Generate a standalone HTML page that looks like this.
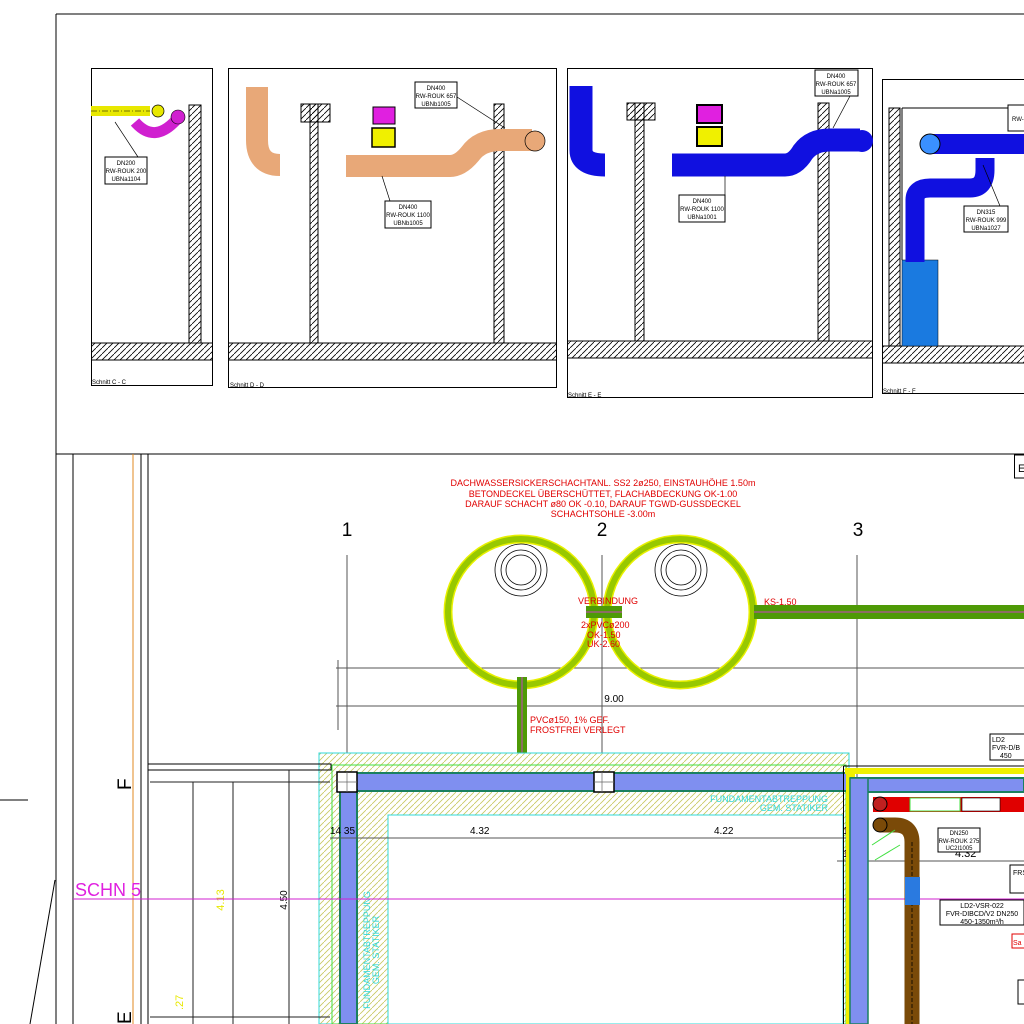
<!DOCTYPE html>
<html><head><meta charset="utf-8"><style>html,body{margin:0;padding:0;background:#fff}svg{display:block}</style></head>
<body>
<svg width="1024" height="1024" viewBox="0 0 1024 1024" xmlns="http://www.w3.org/2000/svg" font-family="Liberation Sans, sans-serif">
<defs>
<pattern id="h" width="6" height="6" patternUnits="userSpaceOnUse"><path d="M-1 7 L7 -1" stroke="#000" stroke-width="0.8"/></pattern>
<pattern id="hy" width="6" height="6" patternUnits="userSpaceOnUse"><rect width="6" height="6" fill="#fff"/><path d="M-1 7 L7 -1" stroke="#c8c860" stroke-width="0.8"/></pattern>
</defs>
<rect width="1024" height="1024" fill="#fff"/>
<!-- frames -->
<g stroke="#000" fill="none" stroke-width="1">
<path d="M56 14H1024M56 14V1024M56 454H1024M73 454V1024M141 454V1024M148 454V1024M0 800H28"/>
</g>
<path d="M133 454 L133 1024" stroke="#e08a20" stroke-width="1"/>
<path d="M56 530 L56 590" stroke="#000"/>
<path d="M55 880 L30 1024" stroke="#000"/>

<!-- Panel C -->
<rect x="91.5" y="68.5" width="121" height="317" fill="none" stroke="#000"/>
<rect x="189" y="105" width="12" height="238" fill="url(#h)" stroke="#000"/>
<rect x="91.5" y="343" width="121" height="17" fill="url(#h)" stroke="#000"/>
<path d="M91 111 H150" stroke="#e8e800" stroke-width="10"/>
<path d="M91 111 H150" stroke="#000" stroke-width="0.6" stroke-dasharray="6 2 1 2"/>
<circle cx="158" cy="111" r="6" fill="#e8e800" stroke="#000" stroke-width="0.7"/>
<path d="M135 122 Q155 145 178 118" stroke="#d020d0" stroke-width="11" fill="none"/>
<circle cx="178" cy="117" r="7" fill="#d020d0" stroke="#000" stroke-width="0.6"/>
<path d="M115 122 L138 157" stroke="#000" stroke-width="0.7"/>
<rect x="105" y="157" width="42" height="27" fill="#fff" stroke="#000"/>
<text x="126" y="165" font-size="6" text-anchor="middle">DN200</text>
<text x="126" y="173" font-size="6" text-anchor="middle">RW-ROUK 200</text>
<text x="126" y="181" font-size="6" text-anchor="middle">UBNa1104</text>
<text x="92" y="384" font-size="6">Schnitt C - C</text>

<!-- Panel D -->
<rect x="228.5" y="68.5" width="328" height="319" fill="none" stroke="#000"/>
<rect x="228.5" y="343" width="328" height="17" fill="url(#h)" stroke="#000"/>
<rect x="310" y="104" width="8" height="239" fill="url(#h)" stroke="#000"/>
<rect x="301" y="104" width="29" height="18" fill="url(#h)" stroke="#000"/>
<rect x="494" y="104" width="10" height="239" fill="url(#h)" stroke="#000"/>
<path d="M257 87 V140 Q257 165 280 165" stroke="#e8a878" stroke-width="22" fill="none"/>
<path d="M346 166 H450 Q460 166 470 154 Q480 140 500 140 H532" stroke="#e8a878" stroke-width="22" fill="none"/>
<circle cx="535" cy="141" r="10" fill="#e8a878" stroke="#000" stroke-width="0.7"/>
<rect x="373" y="107" width="22" height="17" fill="#e020e0" stroke="#000"/>
<rect x="372" y="128" width="23" height="19" fill="#f0f000" stroke="#000" stroke-width="1.5"/>
<path d="M382 176 L390 201" stroke="#000" stroke-width="0.7"/>
<rect x="385" y="201" width="46" height="27" fill="#fff" stroke="#000"/>
<text x="408" y="209" font-size="6" text-anchor="middle">DN400</text>
<text x="408" y="217" font-size="6" text-anchor="middle">RW-ROUK 1100</text>
<text x="408" y="225" font-size="6" text-anchor="middle">UBNb1005</text>
<rect x="415" y="82" width="42" height="26" fill="#fff" stroke="#000"/>
<text x="436" y="90" font-size="6" text-anchor="middle">DN400</text>
<text x="436" y="98" font-size="6" text-anchor="middle">RW-ROUK 657</text>
<text x="436" y="106" font-size="6" text-anchor="middle">UBNb1005</text>
<path d="M457 97 L505 128" stroke="#000" stroke-width="0.7"/>
<text x="230" y="387" font-size="6">Schnitt D - D</text>

<!-- Panel E -->
<rect x="567.5" y="68.5" width="305" height="329" fill="none" stroke="#000"/>
<rect x="567.5" y="341" width="305" height="17" fill="url(#h)" stroke="#000"/>
<rect x="635" y="103" width="9" height="238" fill="url(#h)" stroke="#000"/>
<rect x="627" y="103" width="28" height="17" fill="url(#h)" stroke="#000"/>
<rect x="818" y="103" width="11" height="238" fill="url(#h)" stroke="#000"/>
<path d="M581 86 V150 Q581 165 605 165" stroke="#1010e0" stroke-width="23" fill="none"/>
<path d="M672 165 H785 Q795 165 803 152 Q812 140 830 140 H860" stroke="#1010e0" stroke-width="23" fill="none"/>
<circle cx="862" cy="141" r="11" fill="#1010e0"/>
<rect x="697" y="105" width="25" height="18" fill="#e020e0" stroke="#000" stroke-width="2"/>
<rect x="697" y="127" width="25" height="19" fill="#f0f000" stroke="#000" stroke-width="2"/>
<path d="M725 176 V198" stroke="#000" stroke-width="0.7"/>
<rect x="679" y="195" width="46" height="27" fill="#fff" stroke="#000"/>
<text x="702" y="203" font-size="6" text-anchor="middle">DN400</text>
<text x="702" y="211" font-size="6" text-anchor="middle">RW-ROUK 1100</text>
<text x="702" y="219" font-size="6" text-anchor="middle">UBNa1001</text>
<rect x="815" y="70" width="43" height="26" fill="#fff" stroke="#000"/>
<text x="836" y="78" font-size="6" text-anchor="middle">DN400</text>
<text x="836" y="86" font-size="6" text-anchor="middle">RW-ROUK 657</text>
<text x="836" y="94" font-size="6" text-anchor="middle">UBNa1005</text>
<path d="M850 96 L833 128" stroke="#000" stroke-width="0.7"/>
<text x="568" y="397" font-size="6">Schnitt E - E</text>

<!-- Panel F -->
<rect x="882.5" y="79.5" width="150" height="314" fill="none" stroke="#000"/>
<rect x="882.5" y="346" width="150" height="17" fill="url(#h)" stroke="#000"/>
<rect x="889" y="108" width="11" height="238" fill="url(#h)" stroke="#000"/>
<path d="M902 108 V260 M902 108 H1024" stroke="#000"/>
<rect x="902" y="260" width="36" height="86" fill="#1a7ae0" stroke="#000" stroke-width="0.5"/>
<path d="M915 262 V200 Q915 188 930 188 H970 Q985 188 985 170 V158" stroke="#1010e0" stroke-width="19" fill="none"/>
<path d="M930 144 H1024" stroke="#1010e0" stroke-width="20"/>
<circle cx="930" cy="144" r="10" fill="#3a90ff" stroke="#000"/>
<path d="M983 165 L1000 206" stroke="#000" stroke-width="0.7"/>
<rect x="964" y="206" width="44" height="26" fill="#fff" stroke="#000"/>
<text x="986" y="214" font-size="6" text-anchor="middle">DN315</text>
<text x="986" y="222" font-size="6" text-anchor="middle">RW-ROUK 999</text>
<text x="986" y="230" font-size="6" text-anchor="middle">UBNa1027</text>
<rect x="1008" y="105" width="20" height="26" fill="#fff" stroke="#000"/>
<text x="1012" y="121" font-size="6">RW-F</text>
<text x="883" y="393" font-size="6">Schnitt F - F</text>

<!-- Plan -->
<rect x="1014.5" y="455" width="12" height="23" fill="none" stroke="#000"/>
<text x="1018" y="472" font-size="11">E</text>
<g fill="#e00000" font-size="9" text-anchor="middle" font-family="Liberation Sans Narrow, Liberation Sans, sans-serif">
<text x="603" y="486">DACHWASSERSICKERSCHACHTANL. SS2 2ø250, EINSTAUHÖHE 1.50m</text>
<text x="603" y="497">BETONDECKEL ÜBERSCHÜTTET, FLACHABDECKUNG OK-1.00</text>
<text x="603" y="507">DARAUF SCHACHT ø80 OK -0.10, DARAUF TGWD-GUSSDECKEL</text>
<text x="603" y="517">SCHACHTSOHLE -3.00m</text>
</g>
<g font-size="19" text-anchor="middle"><text x="347" y="536">1</text><text x="602" y="536">2</text><text x="858" y="536">3</text></g>
<g stroke="#555" stroke-width="1"><path d="M347 555V760M602 555V1024M857 555V1024M336 668H1024M336 706H1024M338 660V730"/></g>
<text x="614" y="702" font-size="10" text-anchor="middle">9.00</text>
<circle cx="521" cy="612" r="73" fill="none" stroke="#e8f000" stroke-width="9"/>
<circle cx="521" cy="612" r="73" fill="none" stroke="#98c800" stroke-width="6"/>
<circle cx="680" cy="612" r="73" fill="none" stroke="#e8f000" stroke-width="9"/>
<circle cx="680" cy="612" r="73" fill="none" stroke="#98c800" stroke-width="6"/>
<g fill="none" stroke="#000" stroke-width="0.8">
<circle cx="521" cy="570" r="26"/><circle cx="521" cy="570" r="20"/><circle cx="521" cy="570" r="15"/>
<circle cx="681" cy="570" r="26"/><circle cx="681" cy="570" r="20"/><circle cx="681" cy="570" r="15"/>
</g>
<rect x="754" y="605" width="270" height="14" fill="#4e9a06"/><path d="M754 612H1024" stroke="#a06080" stroke-width="1.5"/>
<rect x="586" y="606" width="36" height="12" fill="#4e9a06"/><path d="M586 612H622" stroke="#a06080" stroke-width="1.5"/>
<rect x="517" y="677" width="10" height="80" fill="#4e9a06"/><path d="M522 677V757" stroke="#a06080" stroke-width="1.5"/>
<circle cx="522" cy="757" r="4" fill="none" stroke="#20c020"/>
<g fill="#e00000" font-size="9" font-family="Liberation Sans Narrow, Liberation Sans, sans-serif">
<text x="578" y="604">VERBINDUNG</text>
<text x="581" y="628">2xPVCø200</text><text x="587" y="638">OK-1.50</text><text x="587" y="647">UK-2.60</text>
<text x="764" y="605">KS-1.50</text>
<text x="530" y="723">PVCø150, 1% GEF.</text><text x="530" y="733">FROSTFREI VERLEGT</text>
<text x="562" y="762">ENTLÜFTUNG</text>
</g>
<text x="532" y="762" font-size="9" fill="#20c020">ABø150</text>

<!-- foundation hatch -->
<rect x="319" y="753" width="530" height="271" fill="url(#hy)" stroke="#30d8d8"/>
<rect x="332" y="765" width="514" height="259" fill="none" stroke="#40e040"/>
<rect x="388" y="815" width="455" height="209" fill="#fff" stroke="#30d8d8"/>
<rect x="356" y="773" width="493" height="18" fill="#7f8ff0" stroke="#1a8060" stroke-width="2"/>
<rect x="340" y="790" width="17" height="234" fill="#7f8ff0" stroke="#1a8060" stroke-width="2"/>
<rect x="337" y="772" width="20" height="20" fill="#fff" stroke="#000" stroke-width="1.5"/>
<rect x="594" y="772" width="20" height="20" fill="#fff" stroke="#000" stroke-width="1.5"/>
<path d="M602 772V792M594 782H614M347 772V792M337 782H357" stroke="#666" stroke-width="0.7"/>
<text x="828" y="802" font-size="9" fill="#30d8d8" text-anchor="end">FUNDAMENTABTREPPUNG</text>
<text x="828" y="811" font-size="9" fill="#30d8d8" text-anchor="end">GEM. STATIKER</text>
<text transform="translate(370 950) rotate(-90)" font-size="9" fill="#30d8d8" text-anchor="middle">FUNDAMENTABTREPPUNG</text>
<text transform="translate(379 950) rotate(-90)" font-size="9" fill="#30d8d8" text-anchor="middle">GEM. STATIKER</text>
<path d="M330 838H857" stroke="#555"/>
<g font-size="10"><text x="470" y="834">4.32</text><text x="714" y="834">4.22</text><text x="330" y="834">14 35</text><text x="843" y="834">10 35</text><text x="843" y="857">10 35</text><text x="955" y="857" font-size="11">4.32</text></g>
<path d="M837 861H1024" stroke="#555"/>

<!-- left dims -->
<rect x="148" y="764" width="183" height="6" fill="none" stroke="#000"/>
<path d="M150 782H330M193 782V1024M233 782V1024M289 770V1024M150 1017H330" stroke="#222"/>
<text transform="translate(224 900) rotate(-90)" font-size="11" fill="#e8e800" text-anchor="middle">4.13</text>
<text transform="translate(287 900) rotate(-90)" font-size="10" text-anchor="middle">4.50</text>
<text transform="translate(183 1010) rotate(-90)" font-size="11" fill="#e8e800">.27</text>
<text transform="translate(131 790) rotate(-90)" font-size="19">F</text>
<text transform="translate(131 1024) rotate(-90)" font-size="19">E</text>

<!-- magenta section line -->
<path d="M73 899H1024" stroke="#d020d0" stroke-width="1"/>
<text x="75" y="896" font-size="18" fill="#e020e0">SCHN 5</text>

<!-- right building -->
<path d="M843.5 766V1024M843.5 766H1024" stroke="#000"/>
<rect x="845" y="768" width="179" height="6" fill="#f0f000"/>
<rect x="846" y="774" width="9" height="250" fill="#f0f000"/>
<rect x="851" y="778" width="173" height="14" fill="#7f8ff0" stroke="#1a8060" stroke-width="2"/>
<rect x="850" y="778" width="18" height="246" fill="#7f8ff0" stroke="#1a8060" stroke-width="1.5"/>
<rect x="873" y="797" width="151" height="15" fill="#e00000"/>
<rect x="910" y="798" width="50" height="13" fill="#fff" stroke="#40e040"/>
<rect x="962" y="798" width="38" height="13" fill="#fff" stroke="#000" stroke-width="0.6"/>
<circle cx="880" cy="804" r="7" fill="#c02020" stroke="#000"/>
<path d="M880 825H895Q912 825 912 842V1024" stroke="#7a4a08" stroke-width="15" fill="none"/>
<circle cx="880" cy="825" r="7" fill="#7a4a08" stroke="#000"/>
<path d="M912 842V1024" stroke="#000" stroke-width="0.8" stroke-dasharray="4 2"/>
<rect x="905" y="877" width="15" height="28" fill="#2a7ae0"/>
<rect x="938" y="828" width="42" height="24" fill="#fff" stroke="#000"/>
<text x="959" y="835" font-size="6" text-anchor="middle">DN250</text><text x="959" y="843" font-size="6" text-anchor="middle">RW-ROUK 275</text><text x="959" y="850" font-size="6" text-anchor="middle">UC2I1005</text>
<rect x="940" y="900" width="84" height="25" fill="#fff" stroke="#000"/>
<text x="982" y="908" font-size="7" text-anchor="middle">LD2-VSR-022</text><text x="982" y="916" font-size="7" text-anchor="middle">FVR-DIBCD/V2 DN250</text><text x="982" y="924" font-size="7" text-anchor="middle">450-1350m³/h</text>
<rect x="990" y="734" width="40" height="26" fill="#fff" stroke="#000"/>
<text x="992" y="742" font-size="7">LD2</text><text x="992" y="750" font-size="7">FVR-D/B</text><text x="1000" y="758" font-size="7">450</text>
<rect x="1010" y="865" width="20" height="28" fill="#fff" stroke="#000"/>
<text x="1013" y="875" font-size="7">FRS</text>
<rect x="1012" y="934" width="14" height="14" fill="#fff" stroke="#e00000"/>
<text x="1013" y="945" font-size="7" fill="#e00000">Sa</text>
<rect x="1018" y="980" width="10" height="24" fill="none" stroke="#000"/>
<path d="M872 845L895 830M875 860L900 845" stroke="#40e040"/>
</svg>
</body></html>
